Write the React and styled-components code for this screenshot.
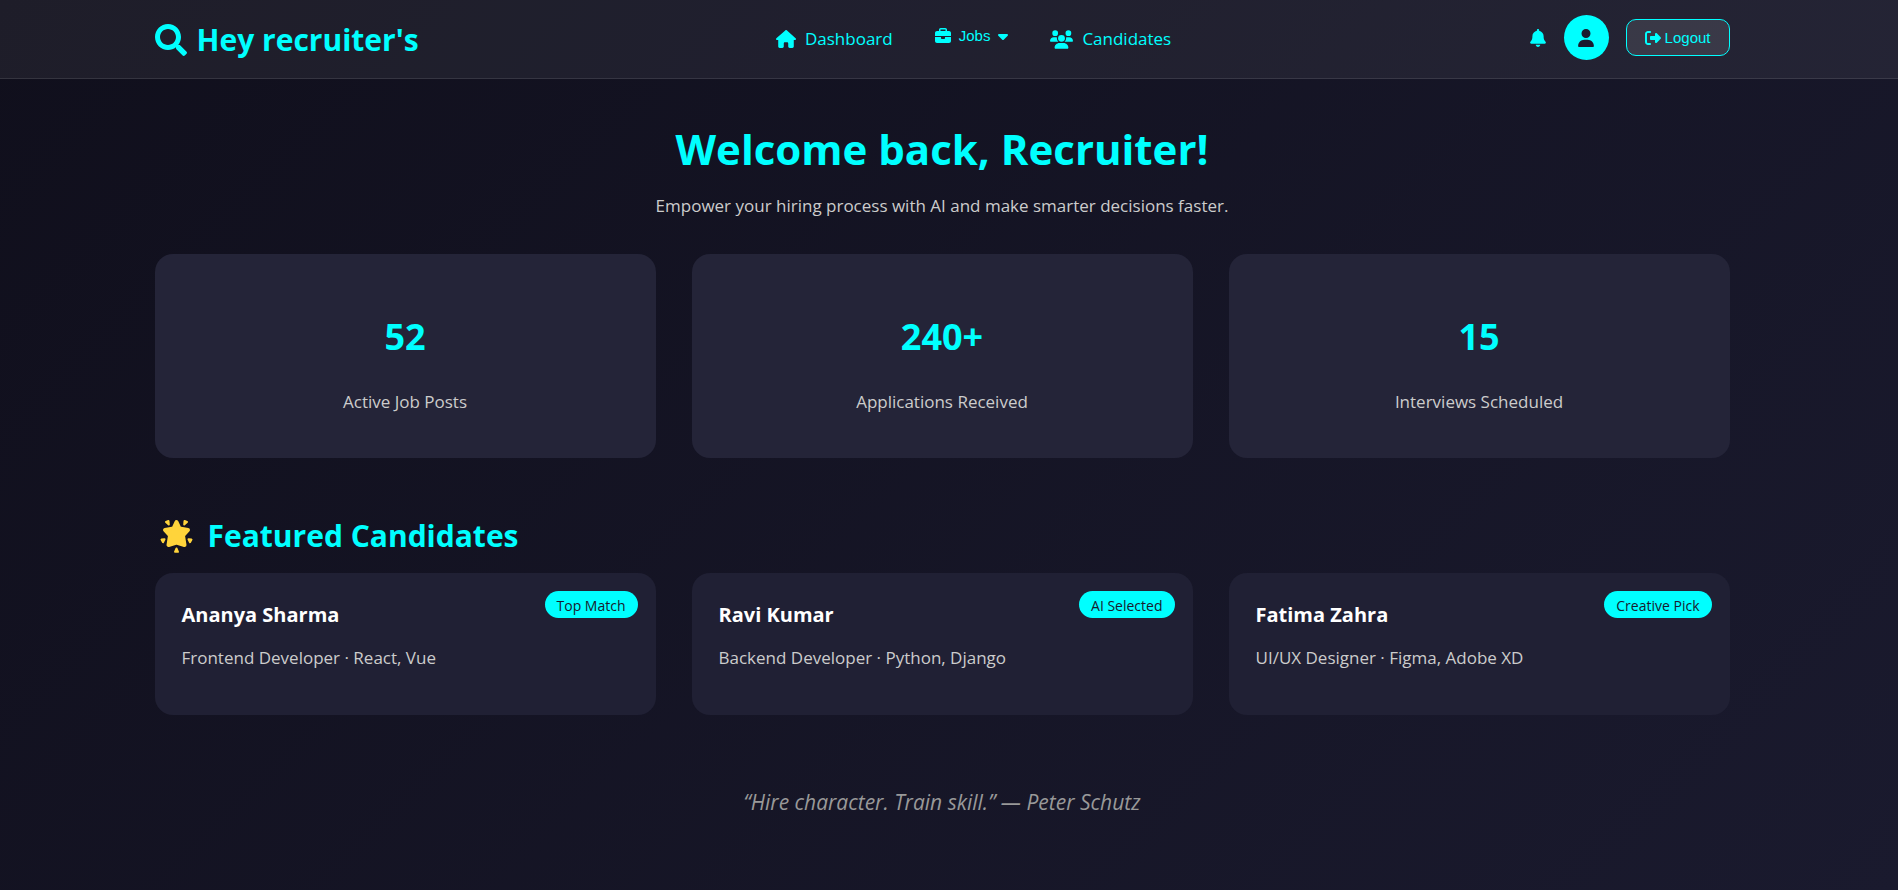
import React from "react";
import styled, { createGlobalStyle } from "styled-components";
import { FaSearch } from "react-icons/fa";
import {
  FaHouse, FaBriefcase, FaCaretDown, FaUsers, FaBell, FaUser, FaRightFromBracket,
} from "react-icons/fa6";

const GlobalStyle = createGlobalStyle`
  *, *::before, *::after { box-sizing: border-box; }
  body {
    margin: 0;
    min-height: 100vh;
    background: linear-gradient(135deg, #100f1c, #1a1a2e);
    color: #fff;
    font-family: "Segoe UI", "Open Sans", "Noto Sans", sans-serif;
    font-size: 17px;
    line-height: 24px;
  }
  h1, h2, h3, p { margin: 0; }
`;

const Header = styled.header`
  padding-right: 14px;
  background: rgba(255, 255, 255, 0.06);
  border-bottom: 1px solid rgba(255, 255, 255, 0.1);
`;

const Container = styled.div`
  width: 83.6%;
  max-width: 1575px;
  margin: 0 auto;
`;

const Bar = styled(Container)`
  display: flex;
  align-items: center;
  justify-content: space-between;
  height: 78px;
`;

const Brand = styled.a`
  display: flex;
  align-items: center;
  gap: 10px;
  padding-top: 2px;
  color: #0ff;
  font-size: 30px;
  font-weight: 700;
  line-height: 40px;
  text-decoration: none;
`;

const Nav = styled.nav`
  display: flex;
  align-items: center;
  gap: 42px;
`;

const NavLink = styled.a`
  display: flex;
  align-items: center;
  gap: 9px;
  color: #0ff;
  text-decoration: none;
`;

const NavButton = styled.button`
  display: flex;
  align-items: center;
  gap: 8px;
  padding: 0 0 6px;
  border: 0;
  background: none;
  color: #0ff;
  font: 15px/18px "Liberation Sans", Arial, sans-serif;
`;

const Caret = styled(FaCaretDown)`
  width: 10px;
  height: 16px;
`;

const Actions = styled.div`
  display: flex;
  align-items: center;
  gap: 17px;
  padding-bottom: 3px;
`;

const IconButton = styled.button`
  display: flex;
  padding: 0;
  border: 0;
  background: none;
  color: #0ff;
`;

const Avatar = styled.button`
  display: grid;
  place-items: center;
  width: 45px;
  height: 45px;
  padding: 0;
  border: 0;
  border-radius: 50%;
  background: #0ff;
  color: #1a1a2e;
`;

const Logout = styled.button`
  display: flex;
  align-items: center;
  gap: 4px;
  height: 37px;
  padding: 0 18px;
  border: 1px solid #0ff;
  border-radius: 10px;
  background: rgba(255, 255, 255, 0.1);
  color: #0ff;
  font: 15px/18px "Liberation Sans", Arial, sans-serif;
`;

const Main = styled.main`
  padding: 40px 14px 60px 0;
`;

const Hero = styled.section`
  text-align: center;
`;

const Title = styled.h1`
  color: #0ff;
  font-size: 42px;
  line-height: 60px;
`;

const Lead = styled.p`
  margin-top: 15px;
  color: #ccc;
`;

const Grid = styled.div`
  display: grid;
  grid-template-columns: repeat(3, 1fr);
  gap: 36px;
`;

const Stats = styled(Grid)`
  margin-top: 36px;
`;

const StatCard = styled.article`
  display: flex;
  flex-direction: column;
  align-items: center;
  gap: 29px;
  padding: 59px 36px 44px;
  border-radius: 18px;
  background: #242438;
`;

const StatValue = styled.h2`
  color: #0ff;
  font-size: 36px;
  line-height: 48px;
`;

const Muted = styled.p`
  color: #ccc;
`;

const SectionTitle = styled.h2`
  display: flex;
  align-items: center;
  gap: 15px;
  margin: 58px 0 17px;
  padding-left: 5px;
  color: #0ff;
  font-size: 30px;
  line-height: 40px;
`;

const CandidateCard = styled.article`
  position: relative;
  min-height: 142px;
  padding: 28px 27px;
  border-radius: 18px;
  background: #202034;
`;

const Name = styled.h3`
  margin-bottom: 17px;
  font-size: 20px;
  line-height: 28px;
`;

const Badge = styled.span`
  position: absolute;
  top: 18px;
  right: 18px;
  padding: 5px 12px 2px;
  border-radius: 14px;
  background: #0ff;
  color: #1a1a2e;
  font-size: 14px;
  line-height: 20px;
`;

const Quote = styled.p`
  margin-top: 71px;
  color: #999;
  font-size: 21px;
  font-style: italic;
  line-height: 32px;
  text-align: center;
`;

const stats = [
  { value: "52", label: "Active Job Posts" },
  { value: "240+", label: "Applications Received" },
  { value: "15", label: "Interviews Scheduled" },
];

const candidates = [
  { name: "Ananya Sharma", role: "Frontend Developer · React, Vue", tag: "Top Match" },
  { name: "Ravi Kumar", role: "Backend Developer · Python, Django", tag: "AI Selected" },
  { name: "Fatima Zahra", role: "UI/UX Designer · Figma, Adobe XD", tag: "Creative Pick" },
];

function GlowingStar() {
  return (
    <svg width="33" height="34" viewBox="0 0 33 34" fill="#ffd43b" stroke="#ffd43b" strokeLinejoin="round" aria-hidden="true">
      <path strokeWidth="4" d="M16.500 3l3 6.500 8.500 1.500-5 5.500 1.500 9.500-8-2.500-8 2.500 1.500-9.500-5-5.500 8.500-1.500z" />
      <path strokeWidth="2" d="M6 3l2.500-1 .3 3.500zM27 3l-2.500-1-.3 3.500zM1.500 20.500l3-.3-1.500 3zM31.500 20.500l-3-.3 1.500 3zM16.500 29.500l1.500 3.300h-3z" />
    </svg>
  );
}

export default function App() {
  return (
    <>
      <GlobalStyle />
      <Header>
        <Bar>
          <Brand href="#"><FaSearch size={32} />Hey recruiter's</Brand>
          <Nav aria-label="Main">
            <NavLink href="#dashboard"><FaHouse size={20} />Dashboard</NavLink>
            <NavButton type="button"><FaBriefcase size={16} />Jobs<Caret /></NavButton>
            <NavLink href="#candidates"><FaUsers size={23} />Candidates</NavLink>
          </Nav>
          <Actions>
            <IconButton type="button" aria-label="Notifications"><FaBell size={18} /></IconButton>
            <Avatar type="button" aria-label="Profile"><FaUser size={18} /></Avatar>
            <Logout type="button"><FaRightFromBracket size={16} />Logout</Logout>
          </Actions>
        </Bar>
      </Header>
      <Main>
        <Container>
          <Hero>
            <Title>Welcome back, Recruiter!</Title>
            <Lead>Empower your hiring process with AI and make smarter decisions faster.</Lead>
          </Hero>
          <Stats>
            {stats.map((s) => (
              <StatCard key={s.label}>
                <StatValue>{s.value}</StatValue>
                <Muted>{s.label}</Muted>
              </StatCard>
            ))}
          </Stats>
          <SectionTitle><GlowingStar />Featured Candidates</SectionTitle>
          <Grid>
            {candidates.map((c) => (
              <CandidateCard key={c.name}>
                <Name>{c.name}</Name>
                <Muted>{c.role}</Muted>
                <Badge>{c.tag}</Badge>
              </CandidateCard>
            ))}
          </Grid>
          <Quote>“Hire character. Train skill.” — Peter Schutz</Quote>
        </Container>
      </Main>
    </>
  );
}
